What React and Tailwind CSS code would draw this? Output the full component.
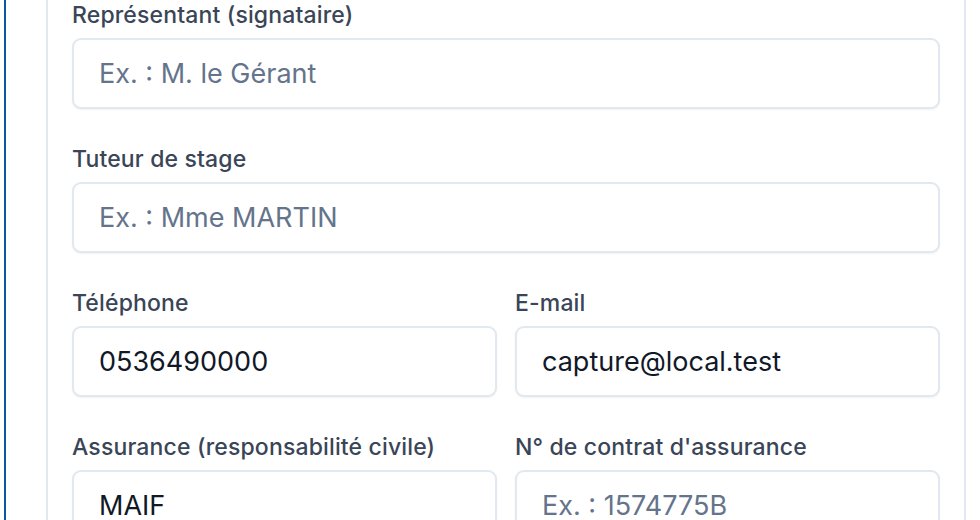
import React from 'react';

const Field = ({ label, placeholder, value }) => (
  <div className="flex flex-col">
    <label className="text-[23px] leading-[30px] mb-[8px] text-[#3a4557] font-medium tracking-[0.15px]">{label}</label>
    <input
      type="text"
      readOnly
      defaultValue={value}
      placeholder={placeholder}
      className="h-[71px] w-full rounded-[9px] border-2 border-[#e2e8f0] bg-white px-[25px] text-[27px] text-[#111827] placeholder:text-[#64748b] shadow-[0_1px_2px_rgba(15,23,42,0.06)] outline-none"
    />
  </div>
);

export default function App() {
  return (
    <div className="w-[980px] h-[520px] overflow-hidden bg-white pl-[4px]" style={{ fontFamily: 'Inter, "Noto Sans", sans-serif' }}>
      <div className="h-full border-l-2 border-[#0b57a6] pl-[40px] pr-[14px]">
        <div className="h-full border-x-2 border-[#e2e8f0] pl-[24px] pr-[24px]">
          <div className="flex flex-col gap-[35px]">
            <Field label="Représentant (signataire)" placeholder="Ex. : M. le Gérant" />
            <Field label="Tuteur de stage" placeholder="Ex. : Mme MARTIN" />
            <div className="grid grid-cols-2 gap-x-[18px] gap-y-[35px]">
              <Field label="Téléphone" value="0536490000" />
              <Field label="E-mail" value="capture@local.test" />
              <Field label="Assurance (responsabilité civile)" value="MAIF" />
              <Field label="N° de contrat d'assurance" placeholder="Ex. : 1574775B" />
            </div>
          </div>
        </div>
      </div>
    </div>
  );
}
